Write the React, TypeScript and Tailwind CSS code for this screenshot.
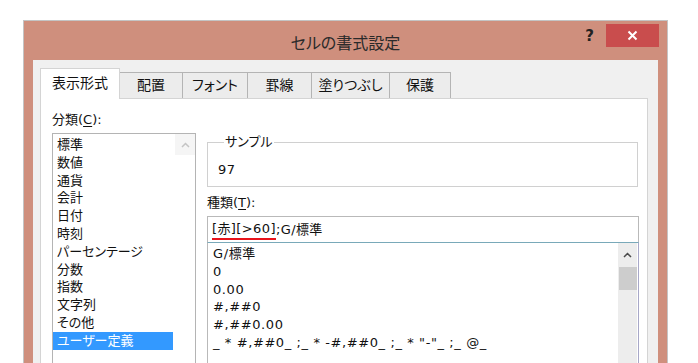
export default function App() {
  const left = ["標準", "数値", "通貨", "会計", "日付", "時刻", "パーセンテージ", "分数", "指数", "文字列", "その他", "ユーザー定義"];
  const right = ["G/標準", "0", "0.00", "#,##0", "#,##0.00", '_ * #,##0_ ;_ * -#,##0_ ;_ * "-"_ ;_ @_'];
  const tabs: [string, string][] = [
    ["配置", "w-[63px]"],
    ["フォント", "w-[65px]"],
    ["罫線", "w-[64px]"],
    ["塗りつぶし", "w-[78px]"],
    ["保護", "w-[61px]"],
  ];
  return (
    <div className="w-[698px] h-[363px] overflow-hidden bg-white pt-[20px] pl-[23px] font-['DejaVu_Sans','Noto_Sans_CJK_JP',sans-serif] [font-feature-settings:'palt'] text-[13px] text-[#111]">
      <div className="w-[645px] h-[343px] border border-b-0 border-[#c4c4c4] bg-[#cf8f7d] flex flex-col">
        <div className="relative h-[39px] pt-[11px] text-center text-[16px] leading-[20px] text-[#2a2a2a] font-['Noto_Sans_CJK_JP',sans-serif]">
          セルの書式設定
          <div className="absolute top-[5px] right-[73px] text-[15px] font-bold leading-[20px] text-[#222] font-['DejaVu_Sans',sans-serif]">?</div>
          <div className="absolute top-[3px] right-[8px] w-[53px] h-[23px] bg-[#c94d4d] flex items-center justify-center">
            <svg width="11" height="11" viewBox="0 0 11 11">
              <path d="M1.5 1.5 L9.5 9.5 M9.5 1.5 L1.5 9.5" stroke="#fff" strokeWidth="2" />
            </svg>
          </div>
        </div>
        <div className="flex-1 mx-[9px] bg-[#f0f0f0] pl-[7px] pr-[10px] pt-[8px] flex flex-col">
          <div className="relative z-10 flex items-end h-[31px]">
            <div className="w-[80px] h-[31px] bg-white border border-b-0 border-[#d4d4d4] flex items-center justify-center text-[14px] pb-[1px]">表示形式</div>
            {tabs.map(([t, w]) => (
              <div key={t} className={`${w} h-[26px] mb-[1px] bg-[#ececec] border-t border-r border-[#b4b4b4] flex items-center justify-center text-[14px]`}>
                {t}
              </div>
            ))}
          </div>
          <div className="-mt-px flex-1 bg-white border border-b-0 border-[#d4d4d4] pl-[11px] pr-[7px] pt-[12px] flex gap-[11px]">
            <div className="w-[144px] flex flex-col">
              <div className="leading-[18px] mb-[4px]">
                分類(<span className="underline underline-offset-2">C</span>):
              </div>
              <div className="relative flex-1 border border-b-0 border-[#b4b4b4] pt-[2px]">
                {left.map((t, i) => (
                  <div
                    key={t}
                    className={`w-[120px] h-[17.8px] leading-[17.8px] pl-[4px] ${i === left.length - 1 ? "bg-[#3399ff] text-white" : ""}`}
                  >
                    {t}
                  </div>
                ))}
                <div className="absolute top-0 right-0 w-[20px] h-[21px] bg-[#f5f5f5] flex items-center justify-center">
                  <svg width="9" height="6" viewBox="0 0 9 6">
                    <path d="M1 5 L4.5 1.5 L8 5" stroke="#c4c4c4" strokeWidth="1.5" fill="none" />
                  </svg>
                </div>
              </div>
            </div>
            <div className="w-[432px] flex flex-col">
              <fieldset className="mt-[22px] w-[431px] border border-[#d0d0d0] pb-[7px] pl-[10px]">
                <legend className="ml-[6px] px-px leading-[18px]">サンプル</legend>
                <div className="leading-[18px] mt-[10px] tracking-[0.5px]">97</div>
              </fieldset>
              <div className="mt-[7px] leading-[18px] mb-[4px]">
                種類(<span className="underline underline-offset-2">T</span>):
              </div>
              <div className="w-[432px] h-[26px] border border-b-0 border-[#b9b9b9] pl-[4px] flex items-center leading-[18px] tracking-[0.4px]">
                <span className="inline-block border-b-2 border-[#e8141b] h-[20px]">[赤][&gt;60]</span>
                <span className="whitespace-pre">;G/標準</span>
              </div>
              <div className="relative flex-1 w-[432px] border border-b-0 border-t-[#79a9b9] border-l-[#b9b9b9] border-r-[#a8a8c8] pt-[2px] pl-[5px] tracking-[0.6px]">
                {right.map((t) => (
                  <div key={t} className="h-[17.8px] leading-[17.8px] whitespace-pre">
                    {t}
                  </div>
                ))}
                <div className="absolute top-0 right-px bottom-0 w-[19px] bg-[#ededed] flex flex-col items-center">
                  <div className="h-[24px] w-full flex items-center justify-center">
                    <svg width="9" height="6" viewBox="0 0 9 6">
                      <path d="M1 5 L4.5 1.5 L8 5" stroke="#4a4a4a" strokeWidth="1.5" fill="none" />
                    </svg>
                  </div>
                  <div className="w-[18px] h-[23px] bg-[#cdcdcd]" />
                </div>
              </div>
            </div>
          </div>
        </div>
      </div>
    </div>
  );
}
